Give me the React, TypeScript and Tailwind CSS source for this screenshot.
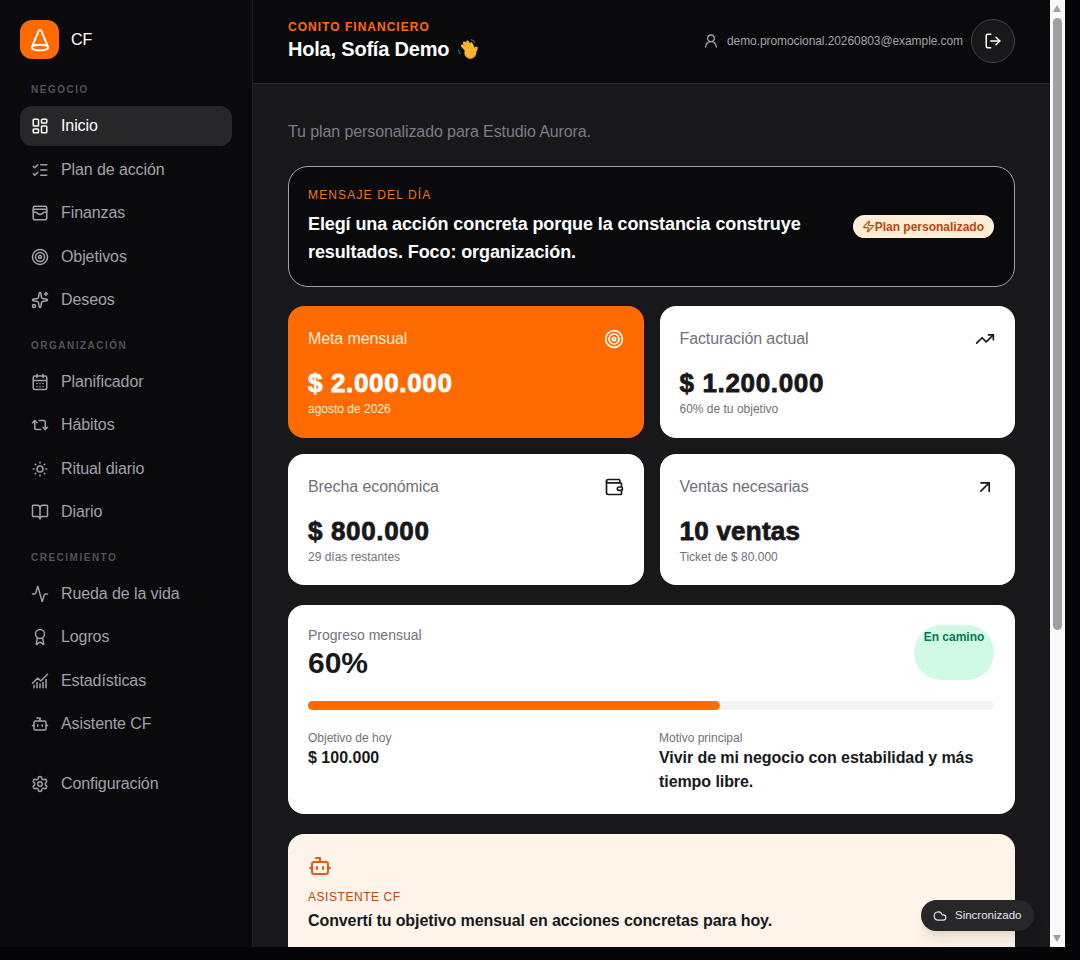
import React from 'react';
import {
  LayoutDashboard, ListChecks, WalletCards, Target, Sparkles, CalendarDays, Repeat2, SunMedium, BookOpen,
  Activity, Award, ChartNoAxesCombined, Bot, Settings, UserRound, LogOut, Zap, TrendingUp, Wallet, ArrowUpRight, Cloud,
} from 'lucide-react';

type IconT = React.ComponentType<{ className?: string; strokeWidth?: number }>;

function NavItem({ icon: Icon, label, active }: { icon: IconT; label: string; active?: boolean }) {
  return (
    <div className={`flex h-[39.5px] items-center gap-3 rounded-xl pl-[11px] text-base tracking-[-0.1px] ${active ? 'bg-[#27272a] text-white' : 'text-[#a1a1aa]'}`}>
      <Icon className="h-[18px] w-[18px] shrink-0" strokeWidth={2} />
      <span>{label}</span>
    </div>
  );
}

function Group({ title, items }: { title: string; items: [IconT, string, boolean?][] }) {
  return (
    <div>
      <div className="h-[17px] pl-[11px] text-[10px] font-semibold leading-[17px] tracking-[1.5px] text-[#52525b]">{title}</div>
      <div className="mt-[8px] flex flex-col gap-1">
        {items.map(([I, l, a]) => <NavItem key={l} icon={I} label={l} active={a} />)}
      </div>
    </div>
  );
}

function Stat({ label, value, sub, icon: Icon, orange, letters }: { label: string; value: string; sub: string; icon: IconT; orange?: boolean; letters?: boolean }) {
  return (
    <div className={`h-[131.5px] rounded-2xl px-5 pt-[21px] ${orange ? 'bg-[#ff6b00] text-white' : 'bg-white text-[#18181b]'}`}>
      <div className="flex h-6 items-center justify-between">
        <span className={`text-base tracking-[-0.1px] ${orange ? 'text-[#ffedd5]' : 'text-[#71717a]'}`}>{label}</span>
        <Icon className="h-5 w-5" strokeWidth={2} />
      </div>
      <div className={`mt-[16px] text-[26px] font-bold leading-8 [-webkit-text-stroke:0.8px_currentColor] ${letters ? 'tracking-[0.25px]' : 'tracking-[0.65px]'}`}>{value}</div>
      <div className={`mt-[2px] text-xs leading-4 ${orange ? 'text-[#ffedd5]' : 'text-[#71717a]'}`}>{sub}</div>
    </div>
  );
}

function Cone() {
  return (
    <svg viewBox="0 0 24 24" className="h-[26px] w-[26px]" fill="none" stroke="white" strokeWidth="1.7" strokeLinecap="round" strokeLinejoin="round">
      <path d="M10.800 3.600c.6-1 1.800-1 2.400 0L19.500 18.500M10.800 3.600 4.500 18.500" />
      <ellipse cx="12" cy="19" rx="7.600" ry="2.600" />
    </svg>
  );
}

function Wave() {
  return (
    <svg viewBox="0 0 24 24" className="ml-[8px] h-[22px] w-[22px]" fill="none" strokeLinecap="round">
      <path d="M15.5 2c1.8.2 3.2 1.3 4 3" stroke="#2f6fa8" strokeWidth="1.2" />
      <path d="M1.5 13c.2 1.6 1 3 2.2 4" stroke="#2f6fa8" strokeWidth="1.2" />
      <g stroke="#fbb62e" strokeWidth="3.4">
        <path d="M11 14 6 8.5" />
        <path d="M13 12 8 5.5" />
        <path d="M15 11 11.5 4.5" />
        <path d="M18 12 15.5 6.5" />
        <path d="M19 16 21 11" />
      </g>
      <circle cx="14.5" cy="16" r="6.5" fill="#fbb62e" />
      <path d="M9 19c1.2 1.8 3 3 5.500 3 2.500 0 4.800-1.600 5.500-4" stroke="#e8931a" strokeWidth="1" />
    </svg>
  );
}

export default function App() {
  return (
    <div className="h-[960px] w-[1080px] overflow-hidden bg-[#050507] font-['Liberation_Sans',Arial,sans-serif]">
      <div className="relative flex h-[947px] w-[1065px] overflow-hidden">
        <aside className="h-full w-[253px] shrink-0 border-r border-[#1f1f23] bg-[#0a0a0c] px-5 pt-5">
          <div className="flex items-center gap-3">
            <div className="flex h-[39px] w-[39px] items-center justify-center rounded-xl bg-[#ff6b00]"><Cone /></div>
            <span className="text-base text-white">CF</span>
          </div>
          <div className="mt-[22.25px]">
            <Group title="NEGOCIO" items={[[LayoutDashboard, 'Inicio', true], [ListChecks, 'Plan de acción'], [WalletCards, 'Finanzas'], [Target, 'Objetivos'], [Sparkles, 'Deseos']]} />
          </div>
          <div className="mt-[17px]">
            <Group title="ORGANIZACIÓN" items={[[CalendarDays, 'Planificador'], [Repeat2, 'Hábitos'], [SunMedium, 'Ritual diario'], [BookOpen, 'Diario']]} />
          </div>
          <div className="mt-[17px]">
            <Group title="CRECIMIENTO" items={[[Activity, 'Rueda de la vida'], [Award, 'Logros'], [ChartNoAxesCombined, 'Estadísticas'], [Bot, 'Asistente CF']]} />
          </div>
          <div className="mt-[20px]"><NavItem icon={Settings} label="Configuración" /></div>
        </aside>

        <main className="h-full w-[797px] shrink-0 overflow-hidden bg-[#18181b]">
          <header className="flex h-[84px] items-center justify-between border-b border-[#27272a] bg-[#0a0a0c] px-[35px] pb-[1px]">
            <div>
              <div className="text-xs font-bold leading-4 tracking-[1.02px] text-[#ff6b00]">CONITO FINANCIERO</div>
              <div className="flex items-center text-xl font-bold leading-7 tracking-[-0.2px] text-white">Hola, Sofía Demo <Wave /></div>
            </div>
            <div className="flex items-center gap-2">
              <UserRound className="h-4 w-4 text-[#a1a1aa]" strokeWidth={2} />
              <span className="text-xs tracking-[-0.08px] text-[#a1a1aa]">demo.promocional.20260803@example.com</span>
              <div className="flex h-11 w-11 items-center justify-center rounded-full border border-[#3f3f46] bg-[#18181b] text-white">
                <LogOut className="h-[18px] w-[18px]" strokeWidth={2} />
              </div>
            </div>
          </header>

          <div className="flex flex-col gap-5 px-[35px] pt-[36px]">
            <p className="h-6 text-base leading-6 tracking-[-0.1px] text-[#7c7c85]">Tu plan personalizado para Estudio Aurora.</p>

            <section className="mt-[2px] flex h-[121px] items-center justify-between rounded-[20px] border border-[#a1a1aa] bg-[#0a0a0c] pl-[19px] pr-5">
              <div className="w-[510px]">
                <div className="text-xs leading-4 tracking-[1.15px] text-[#e8791a]">MENSAJE DEL DÍA</div>
                <div className="mt-[7px] text-lg font-bold leading-7 tracking-[-0.1px] text-white">Elegí una acción concreta porque la constancia construye resultados. Foco: organización.</div>
              </div>
              <div className="flex h-[23px] items-center rounded-full bg-[#ffedd5] pl-[9px] pr-[10px] text-xs font-bold text-[#c2410c]">
                <Zap className="h-[13px] w-[13px]" strokeWidth={2} />Plan personalizado
              </div>
            </section>

            <section className="-mt-[1px] grid grid-cols-2 gap-4">
              <Stat orange label="Meta mensual" value="$ 2.000.000" sub="agosto de 2026" icon={Target} />
              <Stat label="Facturación actual" value="$ 1.200.000" sub="60% de tu objetivo" icon={TrendingUp} />
              <Stat label="Brecha económica" value="$ 800.000" sub="29 días restantes" icon={Wallet} />
              <Stat letters label="Ventas necesarias" value="10 ventas" sub="Ticket de $ 80.000" icon={ArrowUpRight} />
            </section>

            <section className="h-[209px] rounded-2xl bg-white pb-5 pl-5 pr-[21px] pt-5 text-[#18181b]">
              <div className="flex items-start justify-between">
                <div>
                  <div className="text-sm leading-5 text-[#71717a]">Progreso mensual</div>
                  <div className="text-3xl font-bold leading-9">60%</div>
                </div>
                <div className="h-[55px] w-[80px] rounded-[28px] bg-[#d1fae5] pt-[4px] text-center text-xs font-bold text-[#047857]">En camino</div>
              </div>
              <div className="mt-5 h-[9px] rounded-full bg-[#f4f4f5]">
                <div className="h-full rounded-full bg-[#ff6b00]" style={{ width: '60%' }} />
              </div>
              <div className="mt-5 grid grid-cols-2">
                <div>
                  <div className="text-xs leading-4 text-[#71717a]">Objetivo de hoy</div>
                  <div className="text-base font-bold leading-6">$ 100.000</div>
                </div>
                <div className="pl-[8px]">
                  <div className="text-xs leading-4 text-[#71717a]">Motivo principal</div>
                  <div className="text-base font-bold leading-6 tracking-[-0.07px]">Vivir de mi negocio con estabilidad y más tiempo libre.</div>
                </div>
              </div>
            </section>

            <section className="h-[160px] rounded-2xl bg-[#fff4ea] p-5 text-[#18181b]">
              <Bot className="h-6 w-6 text-[#ea580c]" strokeWidth={2} />
              <div className="mt-[11px] text-xs leading-4 tracking-[0.55px] text-[#c2410c]">ASISTENTE CF</div>
              <div className="mt-[4px] text-base font-bold leading-6 tracking-[-0.1px]">Convertí tu objetivo mensual en acciones concretas para hoy.</div>
            </section>
          </div>
        </main>

        <div className="relative h-full w-[15px] shrink-0 bg-[#fafafa]">
          <div className="absolute left-[3px] top-[18px] h-[612px] w-[9px] rounded-full bg-[#a0a0a0]" />
          <div className="absolute left-[3px] top-[5px] h-0 w-0 border-x-[4.5px] border-b-[7px] border-x-transparent border-b-[#a0a0a0]" />
          <div className="absolute bottom-[5px] left-[3px] h-0 w-0 border-x-[4.5px] border-t-[7px] border-x-transparent border-t-[#a0a0a0]" />
        </div>

        <div className="absolute left-[921px] top-[900px] flex h-[31px] w-[113px] items-center gap-2 rounded-full bg-[#27272a] pl-3 text-[11.5px] text-[#e4e4e7] shadow-lg">
          <Cloud className="h-[14px] w-[14px]" strokeWidth={2} />Sincronizado
        </div>
      </div>
    </div>
  );
}
